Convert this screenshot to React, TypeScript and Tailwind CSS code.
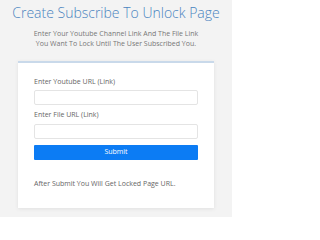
export default function App() {
  return (
    <div
      className="w-[232px] h-[217px] bg-[#f3f3f3] flex flex-col items-center overflow-hidden"
      style={{ fontFamily: '"Open Sans", "Liberation Sans", sans-serif' }}
    >
      <h1 className="mt-[3px] text-[14px] leading-[20px] font-light text-[#4a84bf] whitespace-nowrap">
        Create Subscribe To Unlock Page
      </h1>
      <p className="mt-[6px] text-[7px] leading-[10px] text-[#777] text-center">
        Enter Your Youtube Channel Link And The File Link
        <br />
        You Want To Lock Until The User Subscribed You.
      </p>
      <div className="mt-[12px] w-[196px] h-[147px] bg-white border-t-2 border-[#c9d9ea] shadow-[0_1px_4px_rgba(0,0,0,0.08)] px-[16px] pt-[14px]">
        <label className="block text-[7px] leading-[10px] text-[#666]">Enter Youtube URL (Link)</label>
        <div className="mt-[3px] h-[15px] w-[164px] border border-[#e4e4e4] rounded-[2px] bg-white" />
        <label className="block mt-[5px] text-[7px] leading-[10px] text-[#666]">Enter File URL (Link)</label>
        <div className="mt-[4px] h-[15px] w-[164px] border border-[#e4e4e4] rounded-[2px] bg-white" />
        <div className="mt-[6px] h-[15px] w-[164px] bg-[#0c7cf4] rounded-[1px] flex items-center justify-center text-white text-[7px]">
          Submit
        </div>
        <p className="mt-[19px] text-[7px] leading-[10px] text-[#666]">After Submit You Will Get Locked Page URL.</p>
      </div>
    </div>
  );
}
